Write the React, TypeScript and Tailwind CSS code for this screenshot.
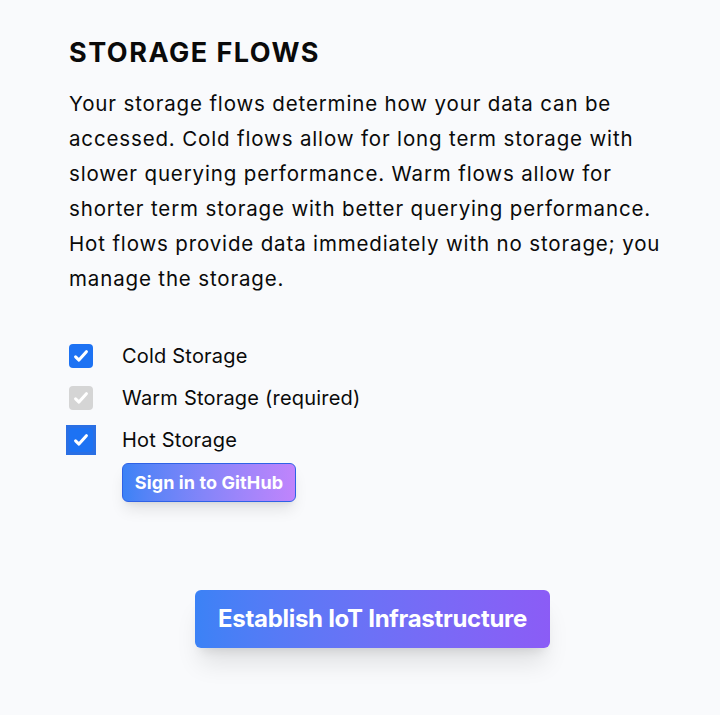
import React, { useState } from 'react';

type Flow = {
  key: string;
  label: string;
  checked: boolean;
  disabled?: boolean;
  focused?: boolean;
};

const FLOWS: Flow[] = [
  { key: 'cold', label: 'Cold Storage', checked: true },
  { key: 'warm', label: 'Warm Storage (required)', checked: true, disabled: true },
  { key: 'hot', label: 'Hot Storage', checked: true, focused: true },
];

// Check mark used inside the boxes
const Tick: React.FC = () => (
  <svg className="h-[18px] w-[18px]" viewBox="0 0 16 16" fill="none" stroke="white" strokeWidth="2.7" strokeLinecap="round" strokeLinejoin="round">
    <path d="M3.2 8.7l3 2.9L12.8 4.2" />
  </svg>
);

const Box: React.FC<{ flow: Flow; on: boolean; toggle: () => void }> = ({ flow, on, toggle }) => {
  const inner = (
    <button
      type="button"
      onClick={flow.disabled ? undefined : toggle}
      className={`flex h-[24px] w-[24px] items-center justify-center rounded-[4px] ${
        flow.disabled ? 'bg-[#d5d5d5]' : on ? 'bg-[#1d72f3]' : 'border-2 border-gray-400 bg-white'
      }`}
    >
      {on && <Tick />}
    </button>
  );
  if (flow.focused) {
    return <span className="-m-[3px] flex bg-[#2a6fe4] p-[3px]">{inner}</span>;
  }
  return inner;
};

const App: React.FC = () => {
  const [state, setState] = useState<Record<string, boolean>>({ cold: true, warm: true, hot: true });

  return (
    <div className="min-h-screen bg-[#f9fafc] font-['Inter',sans-serif] text-[#0a0a0a]">
      <div className="w-[607px] pl-[69px] pt-[37px] box-content">
        <h2 className="mb-[17px] text-[27px] font-bold leading-[32px] tracking-[1.5px]">STORAGE FLOWS</h2>
        <p className="text-[20.5px] leading-[35px] tracking-[0.85px]">
          Your storage flows determine how your data can be accessed. Cold flows allow for long term storage with
          slower querying performance. Warm flows allow for shorter term storage with better querying performance.
          Hot flows provide data immediately with no storage; you manage the storage.
        </p>

        <div className="mt-[48px] flex flex-col gap-[18px]">
          {FLOWS.map((flow) => (
            <div key={flow.key} className="flex h-[24px] items-center gap-[29px]">
              <Box flow={flow} on={state[flow.key]} toggle={() => setState((s) => ({ ...s, [flow.key]: !s[flow.key] }))} />
              <span className="text-[20px] leading-[24px] tracking-[0.2px]">{flow.label}</span>
            </div>
          ))}
        </div>

        <div className="mt-[11px] pl-[53px]">
          <button
            type="button"
            className="h-[39px] w-[174px] rounded-[6px] border border-[#2f62e6] bg-gradient-to-r from-[#3b82f6] to-[#c084fc] text-[18px] font-bold tracking-[0.1px] text-white shadow-lg"
          >
            Sign in to GitHub
          </button>
        </div>

        <div className="mt-[88px] flex justify-center">
          <button
            type="button"
            className="h-[58px] w-[355px] rounded-[6px] bg-gradient-to-r from-[#3b82f6] to-[#8b5cf6] text-[24px] font-bold tracking-[-0.3px] text-white shadow-xl"
          >
            Establish IoT Infrastructure
          </button>
        </div>
      </div>
    </div>
  );
};

export default App;
